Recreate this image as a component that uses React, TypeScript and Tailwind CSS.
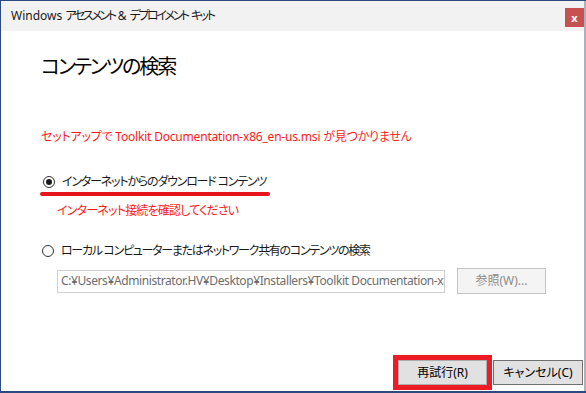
import React from 'react';

const jp = "font-['Segoe_UI','Noto_Sans','Noto_Sans_CJK_JP',sans-serif] [font-feature-settings:'palt']";

const Radio: React.FC<{ checked?: boolean }> = ({ checked }) => (
  <span className="flex h-[12px] w-[12px] shrink-0 items-center justify-center rounded-full border border-[#333333] bg-white">
    {checked && <span className="h-[6px] w-[6px] rounded-full bg-[#1a1a1a]" />}
  </span>
);

const App: React.FC = () => {
  return (
    <div className={`flex h-[393px] w-[586px] flex-col bg-[#2c4a80] pb-[2px] pl-px pt-px ${jp}`}>
      <div className="flex flex-1 flex-col border-r-2 border-[#a9b3bf] bg-white">
        {/* Title bar */}
        <div className="flex h-[30px] shrink-0 items-start justify-between bg-[#f2f2f2]">
          <span className="whitespace-pre pl-[10px] pt-[7px] text-[12px] leading-[16px] text-[#1a1a1a]">
            Windows <span className="tracking-[-2.4px]">アセスメント</span> &amp; <span className="tracking-[-2.4px]">デプロイメント</span> <span className="tracking-[-2.4px]">キット</span>
          </span>
          <button className="mt-[7px] flex h-[19px] w-[19px] items-center justify-center bg-[#c75050] text-[11px] font-bold leading-none text-white">
            x
          </button>
        </div>

        {/* Content */}
        <div className="flex flex-1 flex-col pl-[40px] pr-[38px]">
          <h1 className="mt-[22px] text-[20px] leading-[28px] tracking-[-2px] text-black">コンテンツの検索</h1>

          <p className="mt-[48px] text-[12px] leading-[16px] tracking-[-0.2px] text-[#ff1a1a]">
            セットアップで Toolkit Documentation-x86_en-us.msi が見つかりません
          </p>

          <div className="mt-[29px] flex flex-col items-start">
            <label className="flex items-center gap-[7px] pl-[2px] text-[12px] leading-[16px] tracking-[-1.2px] text-[#1a1a1a]">
              <Radio checked />
              <span className="whitespace-pre">インターネットからのダウンロード コンテンツ</span>
            </label>
            <div className="-ml-[1px] mt-[2px] h-[4px] w-[230px] rounded-full bg-[#e8141c]" />
            <p className="ml-[16px] mt-[7px] text-[12px] leading-[16px] tracking-[-0.8px] text-[#ff1a1a]">
              インターネット接続を確認してください
            </p>
          </div>

          <div className="mt-[24px] flex flex-col">
            <label className="flex items-center gap-[7px] pl-[1px] text-[12px] leading-[16px] tracking-[-1.3px] text-[#1a1a1a]">
              <Radio />
              <span className="whitespace-pre">ローカル コンピューターまたはネットワーク共有のコンテンツの検索</span>
            </label>
            <div className="ml-[16px] mt-[9px] flex items-center gap-[12px]">
              <div className="flex h-[23px] w-[388px] shrink-0 items-center overflow-hidden whitespace-nowrap border border-[#d0d0d0] bg-white pl-[3px] text-[12px] tracking-[-0.4px] text-[#6d6d6d]">
                C:¥Users¥Administrator.HV¥Desktop¥Installers¥Toolkit Documentation-x8
              </div>
              <button className="h-[26px] w-[89px] shrink-0 border border-[#c4c4c4] bg-[#f4f4f4] text-[12px] text-[#8c8c8c]">
                参照(W)...
              </button>
            </div>
          </div>
        </div>

        {/* Footer buttons */}
        <div className="flex items-center justify-end pb-[1px] pr-[1px]">
          <div className="border-[5px] border-[#ed1c24]">
            <button className="block h-[25px] w-[89px] border border-[#adadad] bg-[#e1e1e1] text-[12px] text-black">
              再試行(R)
            </button>
          </div>
          <button className="ml-px h-[25px] w-[90px] border border-[#707070] bg-[#e1e1e1] text-[12px] text-black">
            キャンセル(C)
          </button>
        </div>
      </div>
    </div>
  );
};

export default App;
